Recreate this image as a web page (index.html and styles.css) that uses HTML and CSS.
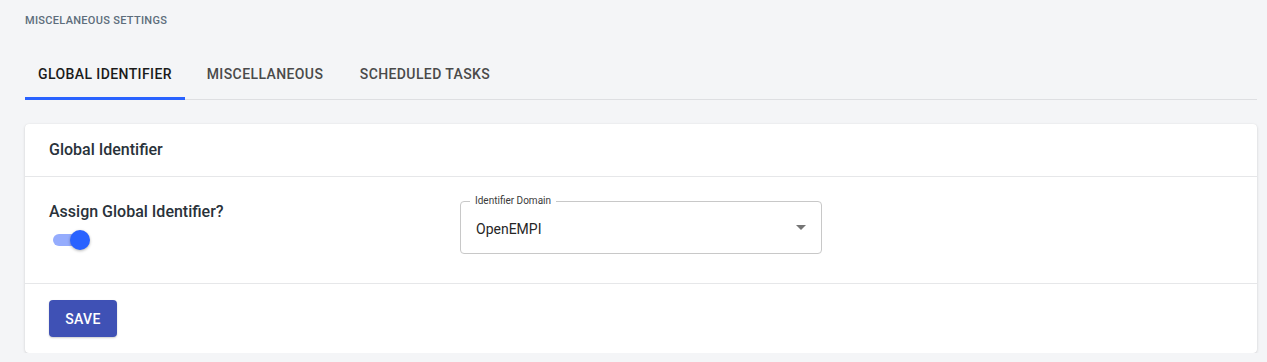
FILE: index.html
```html
<!DOCTYPE html>
<html lang="en">
<head>
    <meta charset="UTF-8">
    <meta name="viewport" content="width=device-width, initial-scale=1.0">
    <title>Miscelaneous Settings</title>
    <link rel="stylesheet" href="styles.css">
</head>
<body>
    <div class="page">
        <div class="page-title">Miscelaneous Settings</div>

        <div class="tabs">
            <div class="tab active">Global Identifier</div>
            <div class="tab">Miscellaneous</div>
            <div class="tab">Scheduled Tasks</div>
        </div>

        <div class="card">
            <div class="card-header">Global Identifier</div>
            <div class="card-body">
                <div class="field">
                    <div class="field-label">Assign Global Identifier?</div>
                    <div class="switch">
                        <div class="switch-track"></div>
                        <div class="switch-thumb"></div>
                    </div>
                </div>
                <div class="select">
                    <span class="select-label">Identifier Domain</span>
                    <span class="select-value">OpenEMPI</span>
                    <svg class="select-arrow" width="10" height="5" viewBox="0 0 10 5">
                        <path d="M0 0 L10 0 L5 5 Z" fill="#757575"/>
                    </svg>
                </div>
            </div>
            <div class="card-footer">
                <button class="btn-save">Save</button>
            </div>
        </div>
    </div>
</body>
</html>
```

FILE: styles.css
```css
:root {
    --bg: #f4f5f7;
    --line: #e6e7e9;
    --blue: #2962ff;
    --indigo: #3f51b5;
    --text-dark: #29323a;
}

* {
    margin: 0;
    padding: 0;
    box-sizing: border-box;
    font-family: Roboto, 'Liberation Sans', sans-serif;
}

body {
    background: var(--bg);
}

.page {
    padding: 14px 10px 0 25px;
}

.page-title {
    font-size: 11px;
    text-transform: uppercase;
    color: #5d6d7b;
    letter-spacing: 0.3px;
    line-height: 13px;
    font-weight: 500;
}

.tabs {
    display: flex;
    margin-top: 26px;
    border-bottom: 1px solid #dedfe2;
}

.tab {
    width: 160px;
    height: 47px;
    display: flex;
    align-items: center;
    justify-content: center;
    padding-bottom: 2px;
    font-size: 14px;
    font-weight: 500;
    letter-spacing: 0.4px;
    text-transform: uppercase;
    color: #4a4a4a;
    border-bottom: 3px solid transparent;
    margin-bottom: -1px;
}

.tab.active {
    color: #1b1b1b;
    border-bottom-color: var(--blue);
}

.card {
    margin-top: 24px;
    background: #fff;
    border-radius: 4px;
    box-shadow: 0 1px 3px rgba(0, 0, 0, 0.14), 0 0 1px rgba(0, 0, 0, 0.08);
}

.card-header {
    padding: 16px 24px;
    height: 53px;
    font-size: 16px;
    font-weight: 500;
    color: var(--text-dark);
    line-height: 20px;
    border-bottom: 1px solid var(--line);
}

.card-body {
    display: grid;
    grid-template-columns: 411px 362px;
    padding: 24px 24px 0;
    height: 107px;
    border-bottom: 1px solid var(--line);
}

.field-label {
    font-size: 16px;
    font-weight: 500;
    color: var(--text-dark);
    line-height: 20px;
    margin-top: 1px;
}

.switch {
    position: relative;
    width: 42px;
    height: 24px;
    margin-top: 5px;
    margin-left: 3px;
}

.switch-track {
    position: absolute;
    left: 1px;
    top: 7px;
    width: 34px;
    height: 12px;
    border-radius: 6px;
    background: #95acfd;
}

.switch-thumb {
    position: absolute;
    left: 18px;
    top: 3px;
    width: 20px;
    height: 20px;
    border-radius: 50%;
    background: var(--blue);
    box-shadow: 0 1px 3px rgba(0, 0, 0, 0.3);
}

.select {
    position: relative;
    height: 53px;
    border: 1px solid #c8c8c8;
    border-radius: 4px;
    display: flex;
    align-items: center;
    padding: 0 14px 0 15px;
}

.select-label {
    position: absolute;
    top: -7px;
    left: 9px;
    padding: 0 5px;
    background: #fff;
    font-size: 10px;
    line-height: 12px;
    color: #3a3a3a;
}

.select-value {
    flex: 1;
    font-size: 14px;
    color: #262626;
    padding-top: 2px;
}

.select-arrow {
    margin-right: 1px;
}

.card-footer {
    padding: 16px 24px;
}

.btn-save {
    width: 68px;
    height: 37px;
    border: none;
    border-radius: 4px;
    background: var(--indigo);
    color: #fff;
    font-size: 14px;
    font-weight: 500;
    letter-spacing: 0.4px;
    text-transform: uppercase;
    box-shadow: 0 1px 2px rgba(0, 0, 0, 0.2);
}
```
